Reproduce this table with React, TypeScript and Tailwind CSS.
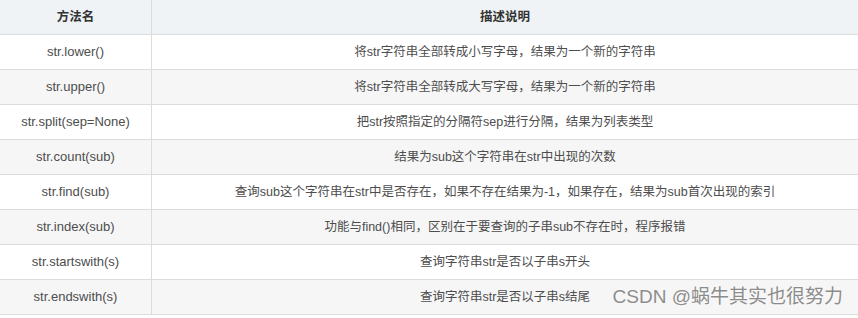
import React from "react";

const rows: [string, string][] = [
  ["str.lower()", "将str字符串全部转成小写字母，结果为一个新的字符串"],
  ["str.upper()", "将str字符串全部转成大写字母，结果为一个新的字符串"],
  ["str.split(sep=None)", "把str按照指定的分隔符sep进行分隔，结果为列表类型"],
  ["str.count(sub)", "结果为sub这个字符串在str中出现的次数"],
  ["str.find(sub)", "查询sub这个字符串在str中是否存在，如果不存在结果为-1，如果存在，结果为sub首次出现的索引"],
  ["str.index(sub)", "功能与find()相同，区别在于要查询的子串sub不存在时，程序报错"],
  ["str.startswith(s)", "查询字符串str是否以子串s开头"],
  ["str.endswith(s)", "查询字符串str是否以子串s结尾"],
];

const App = () => {
  return (
    <div
      className="relative w-[858px] h-[318px] bg-white overflow-hidden"
      style={{ fontFamily: '"Liberation Sans", Arial, "Noto Sans CJK SC", sans-serif' }}
    >
      <div className="grid grid-cols-[152px_1fr] text-[12.5px]">
        <div className="h-[35px] flex items-center justify-center bg-[#eff3f6] border-b border-r border-[#dcdcdc] font-bold text-[#333333]">
          方法名
        </div>
        <div className="h-[35px] flex items-center justify-center bg-[#eff3f6] border-b border-[#dcdcdc] font-bold text-[#333333]">
          描述说明
        </div>
        {rows.map(([name, desc], i) => (
          <React.Fragment key={name}>
            <div
              className={`h-[35px] flex items-center justify-center border-b border-r border-[#dcdcdc] text-[13px] text-[#4d4d4d] ${
                i % 2 === 1 ? "bg-[#f6f6f6]" : "bg-white"
              }`}
            >
              {name}
            </div>
            <div
              className={`h-[35px] flex items-center justify-center border-b border-[#dcdcdc] text-[#4d4d4d] ${
                i % 2 === 1 ? "bg-[#f6f6f6]" : "bg-white"
              }`}
            >
              {desc}
            </div>
          </React.Fragment>
        ))}
      </div>

      {/* watermark */}
      <div className="absolute right-[15px] bottom-[7px] text-[19px] text-[#8c8c8c] [text-shadow:0_0_2px_#ffffff]">
        CSDN @蜗牛其实也很努力
      </div>
    </div>
  );
};

export default App;
